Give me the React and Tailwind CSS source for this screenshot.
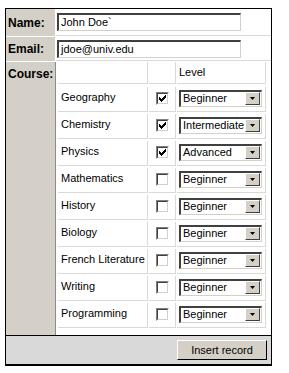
import React from 'react';

const courses = [
  { name: 'Geography', checked: true, level: 'Beginner' },
  { name: 'Chemistry', checked: true, level: 'Intermediate' },
  { name: 'Physics', checked: true, level: 'Advanced' },
  { name: 'Mathematics', checked: false, level: 'Beginner' },
  { name: 'History', checked: false, level: 'Beginner' },
  { name: 'Biology', checked: false, level: 'Beginner' },
  { name: 'French Literature', checked: false, level: 'Beginner' },
  { name: 'Writing', checked: false, level: 'Beginner' },
  { name: 'Programming', checked: false, level: 'Beginner' },
];

const Checkbox = ({ checked }) => (
  <div className="w-[13px] h-[13px] border-t border-l border-t-[#808080] border-l-[#808080] border-r border-b border-r-white border-b-white">
    <div className="w-full h-full border-t border-l border-t-[#404040] border-l-[#404040] border-r border-b border-r-[#d4d0c8] border-b-[#d4d0c8] bg-white flex items-center justify-center">
      {checked && (
        <svg width="7" height="7" viewBox="0 0 7 7">
          <path d="M0 2h1v1h1v1h1V3h1V2h1V1h1V0h1v3H6v1H5v1H4v1H3v1H2V6H1V5H0z" fill="#000" />
        </svg>
      )}
    </div>
  </div>
);

const Select = ({ value }) => (
  <div className="w-[83px] h-[17px] border-t-2 border-l-2 border-t-[#404040] border-l-[#404040] border-r border-b border-r-[#d4d0c8] border-b-[#d4d0c8] bg-white flex items-center">
    <span className="flex-1 pl-[2px] leading-none text-black overflow-hidden whitespace-nowrap">{value}</span>
    <div className="w-[15px] h-[13px] mr-[1px] bg-[#d4d0c8] border-t border-l border-t-white border-l-white border-r border-b border-r-[#404040] border-b-[#404040] flex items-center justify-center">
      <svg width="5" height="3" viewBox="0 0 5 3">
        <path d="M0 0h5L2.5 3z" fill="#000" />
      </svg>
    </div>
  </div>
);

const TextInput = ({ value }) => (
  <div className="ml-[1px] w-[184px] h-[18px] border-t-2 border-l-2 border-t-[#404040] border-l-[#404040] border-r border-b border-r-[#d4d0c8] border-b-[#d4d0c8] bg-white flex items-center pl-[2px] text-black">
    {value}
  </div>
);

const cell = 'border-r border-b border-[#d9d9d9]';

export default function App() {
  return (
    <div className="min-h-screen bg-white pt-[8px] pl-[5px] font-['Liberation_Sans',Arial,sans-serif] text-[11px] text-black">
      <div className="w-[267px] border border-black border-b-2 flex flex-col bg-white">
        <div className="flex h-[27px]">
          <div className="w-[49px] bg-[#d4d0c8] font-bold text-[12px] pl-[2px] flex items-center">Name:</div>
          <div className="flex-1 ml-[1px] border-b border-[#d9d9d9] flex items-center">
            <TextInput value="John Doe`" />
          </div>
        </div>
        <div className="flex h-[24px] mt-[1px]">
          <div className="w-[49px] bg-[#d4d0c8] font-bold text-[12px] pl-[2px] flex items-center">Email:</div>
          <div className="flex-1 ml-[1px] border-b border-[#d9d9d9] flex items-center">
            <TextInput value="jdoe@univ.edu" />
          </div>
        </div>
        <div className="flex mt-[1px]">
          <div className="w-[50px] bg-[#d4d0c8] border-r border-[#8c8c8c] font-bold text-[12px] pl-[2px] pt-[3px]">Course:</div>
          <div className="flex-1 pl-[2px] pb-[7px] flex flex-col">
            <div className="grid grid-cols-[90px_27px_89px] gap-x-[1px] h-[22px]">
              <div className={cell}></div>
              <div className={cell}></div>
              <div className={`${cell} pl-[2px] flex items-center`}>Level</div>
            </div>
            <div className="mt-[3px] flex flex-col gap-[2px]">
              {courses.map((c) => (
                <div key={c.name} className="grid grid-cols-[90px_27px_89px] gap-x-[1px] h-[25px]">
                  <div className={`${cell} pl-[3px] pb-[4px] flex items-center whitespace-nowrap`}>{c.name}</div>
                  <div className={`${cell} pb-[2px] flex items-center justify-center`}>
                    <Checkbox checked={c.checked} />
                  </div>
                  <div className={`${cell} pl-[2px] pb-[2px] flex items-center`}>
                    <Select value={c.level} />
                  </div>
                </div>
              ))}
            </div>
          </div>
        </div>
        <div className="h-[29px] border-t border-black bg-[#d9d9d9] flex items-center justify-end pr-[4px]">
          <button className="w-[90px] h-[20px] bg-[#d4d0c8] border-t border-l border-t-white border-l-white border-r border-b border-r-black border-b-black text-[11px] leading-none">
            Insert record
          </button>
        </div>
      </div>
    </div>
  );
}
